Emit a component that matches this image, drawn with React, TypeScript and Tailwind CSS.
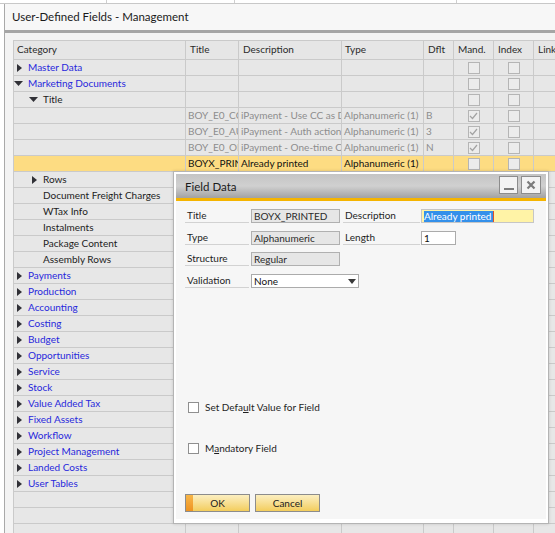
import React from "react";

type Row = {
  cat?: string;
  level?: 0 | 1 | 2;
  arrow?: "right" | "down";
  title?: string;
  desc?: string;
  type?: string;
  dflt?: string;
  muted?: boolean;
  active?: boolean;
  boxes?: "empty" | "checked";
};

const topLevel = (cat: string): Row => ({ cat, level: 0, arrow: "right" });
const sub = (cat: string): Row => ({ cat, level: 2 });

const rows: Row[] = [
  { cat: "Master Data", level: 0, arrow: "right", boxes: "empty" },
  { cat: "Marketing Documents", level: 0, arrow: "down", boxes: "empty" },
  { cat: "Title", level: 1, arrow: "down", boxes: "empty" },
  { title: "BOY_E0_CCDEF", desc: "iPayment - Use CC as Default", type: "Alphanumeric (1)", dflt: "B", muted: true, boxes: "checked" },
  { title: "BOY_E0_AUTHACT", desc: "iPayment - Auth action", type: "Alphanumeric (1)", dflt: "3", muted: true, boxes: "checked" },
  { title: "BOY_E0_ONETIME", desc: "iPayment - One-time CC", type: "Alphanumeric (1)", dflt: "N", muted: true, boxes: "checked" },
  { title: "BOYX_PRINTED", desc: "Already printed", type: "Alphanumeric (1)", active: true, boxes: "empty" },
  { cat: "Rows", level: 2, arrow: "right" },
  sub("Document Freight Charges"),
  sub("WTax Info"),
  sub("Instalments"),
  sub("Package Content"),
  sub("Assembly Rows"),
  topLevel("Payments"),
  topLevel("Production"),
  topLevel("Accounting"),
  topLevel("Costing"),
  topLevel("Budget"),
  topLevel("Opportunities"),
  topLevel("Service"),
  topLevel("Stock"),
  topLevel("Value Added Tax"),
  topLevel("Fixed Assets"),
  topLevel("Workflow"),
  topLevel("Project Management"),
  topLevel("Landed Costs"),
  topLevel("User Tables"),
  {},
  {},
  {},
];

const grid = "grid grid-cols-[172px_53px_103px_82px_30px_40px_40px_60px]";
const cell = "border-r border-[#cacaca] overflow-hidden whitespace-nowrap flex items-center";

function Arrow({ dir }: { dir: "right" | "down" }) {
  if (dir === "right")
    return (
      <svg width="5" height="8" viewBox="0 0 5 8" className="shrink-0">
        <polygon points="0,0 5,4 0,8" fill="#303036" />
      </svg>
    );
  return (
    <svg width="9" height="5" viewBox="0 0 9 5" className="shrink-0">
      <polygon points="0,0 9,0 4.5,5" fill="#303036" />
    </svg>
  );
}

function GridBox({ checked }: { checked?: boolean }) {
  return (
    <div className="w-[12px] h-[12px] border border-[#b5b5b5] bg-[#ececec] flex items-center justify-center">
      {checked && (
        <svg width="9" height="8" viewBox="0 0 9 8">
          <polyline points="1,4 3.5,6.5 8,1" fill="none" stroke="#a3a3a3" strokeWidth="1.2" />
        </svg>
      )}
    </div>
  );
}

function CategoryCell({ row }: { row: Row }) {
  const slot = row.level === 0 ? "w-[14px]" : "w-[29px]";
  let arrowPad = "";
  if (row.level === 0 && row.arrow === "right") arrowPad = "ml-[3px]";
  if (row.level === 1) arrowPad = "ml-[15px]";
  if (row.level === 2) arrowPad = "ml-[18px]";
  return (
    <div className={cell}>
      {row.cat && (
        <>
          <div className={`${slot} shrink-0 flex items-center`}>
            {row.arrow && (
              <div className={arrowPad}>
                <Arrow dir={row.arrow} />
              </div>
            )}
          </div>
          <span className={row.level === 0 ? "text-[#2727dc]" : "text-[#1c1c1c]"}>{row.cat}</span>
        </>
      )}
    </div>
  );
}

function TableRow({ row }: { row: Row }) {
  const bg = row.active ? "bg-[#fddc82]" : "bg-[#e7e7e7]";
  const txt = row.muted ? "text-[#8d8d8d]" : "text-[#111]";
  return (
    <div className={`${grid} h-[16px] border-b border-[#cacaca] ${bg}`}>
      <CategoryCell row={row} />
      <div className={`${cell} pl-[2px] ${txt}`}>{row.title}</div>
      <div className={`${cell} pl-[2px] ${txt}`}>{row.desc}</div>
      <div className={`${cell} pl-[2px] ${txt}`}>{row.type}</div>
      <div className={`${cell} pl-[2px] ${txt}`}>{row.dflt}</div>
      <div className={`${cell} justify-center`}>{row.boxes && <GridBox checked={row.boxes === "checked"} />}</div>
      <div className={`${cell} justify-center`}>{row.boxes && <GridBox />}</div>
      <div className={cell} />
    </div>
  );
}

function Label({ text, w }: { text: string; w: string }) {
  return (
    <div className={`${w} h-[14px] border-b border-[#d2d2d2] flex items-center pl-[2px] text-[#1e1e1e] shrink-0`}>
      {text}
    </div>
  );
}

function ReadOnly({ text }: { text: string }) {
  return (
    <div className="w-[89px] h-[14px] ml-[2px] border border-[#b0b0b0] bg-[#e6e6e6] flex items-center pl-[2px] text-[#2a2a2a] shrink-0">
      {text}
    </div>
  );
}

function DialogCheck({ children }: { children: React.ReactNode }) {
  return (
    <div className="flex items-center h-[15px] ml-[3px]">
      <div className="w-[11px] h-[11px] border border-[#8f8f8f] bg-white shrink-0" />
      <span className="ml-[6px] text-[#1e1e1e]">{children}</span>
    </div>
  );
}

function FieldDialog() {
  return (
    <div className="absolute left-[173px] top-[171px] w-[376px] h-[353px] border border-[#b4b4b4] bg-white p-[2px] pb-[4px] flex flex-col shadow-[0_0_3px_rgba(0,0,0,0.15)]">
      <div className="h-[24px] bg-gradient-to-b from-[#c4c4c4] via-[#d0d0d0] to-[#a2a2a2] flex items-start justify-between pl-[9px] pr-[5px] shrink-0">
        <span className="text-[11.5px] text-[#1a1a1a] leading-[25px]">Field Data</span>
        <div className="flex gap-[3px] pt-[2px]">
          <div className="w-[19px] h-[18px] border border-[#8c8c8c] bg-[#f3f3f3] flex items-end justify-center pb-[3px]">
            <div className="w-[10px] h-[2px] bg-[#7c7c7c]" />
          </div>
          <div className="w-[20px] h-[18px] border border-[#8c8c8c] bg-[#f3f3f3] flex items-center justify-center">
            <svg width="10" height="10" viewBox="0 0 10 10">
              <path d="M1.5 1.5 L8.5 8.5 M8.5 1.5 L1.5 8.5" stroke="#7c7c7c" strokeWidth="2.2" />
            </svg>
          </div>
        </div>
      </div>
      <div className="h-[3px] bg-[#f5b400] shrink-0" />
      <div className="flex-1 bg-[#f6f6f6] flex flex-col pl-[9px] pt-[8px] text-[10px]">
        <div className="flex">
          <Label text="Title" w="w-[64px]" />
          <ReadOnly text="BOYX_PRINTED" />
          <div className="ml-[3px]">
            <Label text="Description" w="w-[77px]" />
          </div>
          <div className="w-[113px] h-[14px] ml-[1px] border border-[#c6c6c6] bg-[#fff3a6] flex items-center pl-[2px]">
            <span className="bg-[#3390ea] text-white leading-[11px] pr-[2px]">Already printed</span>
            <span className="w-px h-[11px] bg-[#e0502a]" />
          </div>
        </div>
        <div className="flex mt-[8px]">
          <Label text="Type" w="w-[64px]" />
          <ReadOnly text="Alphanumeric" />
          <div className="ml-[3px]">
            <Label text="Length" w="w-[77px]" />
          </div>
          <div className="w-[35px] h-[14px] ml-[1px] border border-[#ababab] bg-white flex items-center pl-[2px] text-[#111]">1</div>
        </div>
        <div className="flex mt-[7px]">
          <Label text="Structure" w="w-[64px]" />
          <ReadOnly text="Regular" />
        </div>
        <div className="flex mt-[8px]">
          <Label text="Validation" w="w-[64px]" />
          <div className="w-[108px] h-[14px] ml-[2px] border border-[#ababab] bg-white flex items-center justify-between pl-[2px] pr-[2px] text-[#111]">
            <span>None</span>
            <svg width="8" height="5" viewBox="0 0 8 5">
              <polygon points="0,0 8,0 4,5" fill="#3a3a3a" />
            </svg>
          </div>
        </div>
        <div className="mt-[112px]">
          <DialogCheck>
            Set Defa<span className="underline">u</span>lt Value for Field
          </DialogCheck>
        </div>
        <div className="mt-[26px]">
          <DialogCheck>
            M<span className="underline">a</span>ndatory Field
          </DialogCheck>
        </div>
        <div className="flex gap-[5px] mt-[38px]">
          <button className="relative w-[65px] h-[18px] border border-[#8c8c8c] bg-gradient-to-b from-[#fcefc0] to-[#f3cd5a] text-[#1a1a1a] flex items-center justify-center overflow-hidden">
            <span className="absolute left-0 top-0 bottom-0 w-[7px] bg-gradient-to-b from-[#f7b648] to-[#ee9320]" />
            <span className="relative">OK</span>
          </button>
          <button className="w-[65px] h-[18px] border border-[#8c8c8c] bg-gradient-to-b from-[#fcefc0] to-[#f3cd5a] text-[#1a1a1a] flex items-center justify-center">
            Cancel
          </button>
        </div>
      </div>
    </div>
  );
}

export default function App() {
  return (
    <div className="relative w-[555px] h-[533px] overflow-hidden bg-white font-['Lato',sans-serif] text-[10px]">
      {/* window behind */}
      <div className="h-[4px] border-b border-[#c8c8c8] flex">
        <div className="w-[107px] border-r border-[#cfcfcf]" />
        <div className="w-[128px] border-r border-[#cfcfcf]" />
        <div className="w-[222px] border-r border-[#cfcfcf]" />
      </div>

      <div className="flex h-[529px]">
        <div className="w-[4px] shrink-0" />
        <div className="flex-1 border-l border-[#a9a9a9] flex flex-col min-w-0">
          <div className="h-[26px] bg-[#f7f7f7] pl-[7px] flex items-center text-[11.5px] text-[#1a1a1a] shrink-0">
            User-Defined Fields - Management
          </div>
          <div className="h-[3px] bg-[#a5a5a5] shrink-0" />
          <div className="flex-1 bg-[#f3f3f3] pl-[8px] pt-[7px] overflow-hidden">
            <div className="border-l border-[#cacaca] w-[600px]">
              <div className={`${grid} h-[20px] border-y border-[#cacaca] bg-[#e6e6e6] text-[#2a2a2a]`}>
                <div className={`${cell} pl-[3px] pb-[2px]`}>Category</div>
                <div className={`${cell} pl-[4px] pb-[2px]`}>Title</div>
                <div className={`${cell} pl-[4px] pb-[2px]`}>Description</div>
                <div className={`${cell} pl-[3px] pb-[2px]`}>Type</div>
                <div className={`${cell} pl-[4px] pb-[2px]`}>Dflt</div>
                <div className={`${cell} pl-[4px] pb-[2px]`}>Mand.</div>
                <div className={`${cell} pl-[4px] pb-[2px]`}>Index</div>
                <div className={`${cell} pl-[4px] pb-[2px]`}>Link</div>
              </div>
              {rows.map((r, i) => (
                <TableRow key={i} row={r} />
              ))}
            </div>
          </div>
        </div>
      </div>

      <FieldDialog />
    </div>
  );
}
